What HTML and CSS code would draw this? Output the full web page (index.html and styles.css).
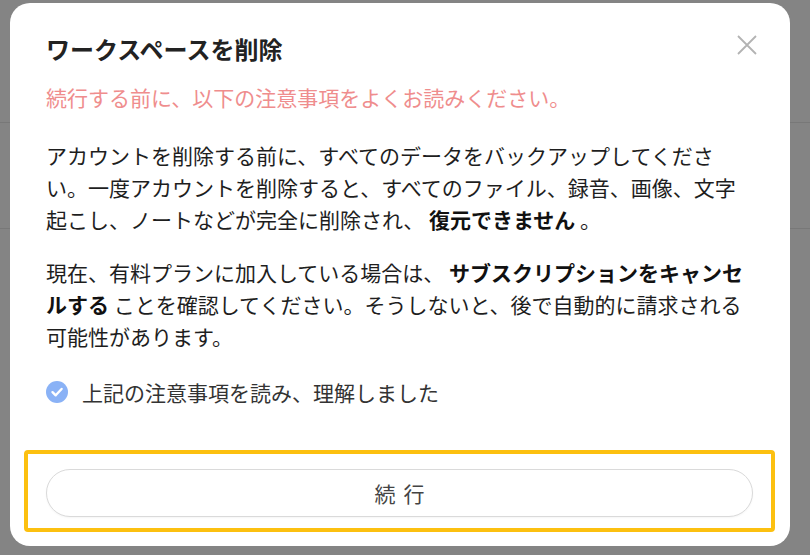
FILE: index.html
```html
<!doctype html>
<html lang="ja">
<head>
<meta charset="utf-8">
<meta name="viewport" content="width=device-width, initial-scale=1.0">
<link rel="stylesheet" href="styles.css">
<title>ワークスペースを削除</title>
</head>
<body>
<div class="dialog">
    <div class="dialog-head">
        <h2 class="dialog-title">ワークスペースを削除</h2>
        <button class="close-btn" aria-label="閉じる">
            <svg width="20" height="20" viewBox="0 0 20 20"><path d="M1 1 L19 19 M19 1 L1 19" stroke="#b3b3b3" stroke-width="1.8" fill="none"/></svg>
        </button>
    </div>

    <p class="notice">続行する前に、以下の注意事項をよくお読みください。</p>

    <p class="para">アカウントを削除する前に、すべてのデータをバックアップしてください。一度アカウントを削除すると、すべてのファイル、録音、画像、文字起こし、ノートなどが完全に削除され、 <strong>復元できません</strong> 。</p>

    <p class="para">現在、有料プランに加入している場合は、 <strong>サブスクリプションをキャンセルする</strong> ことを確認してください。そうしないと、後で自動的に請求される可能性があります。</p>

    <label class="check-row">
        <span class="check-icon">
            <svg width="22" height="22" viewBox="0 0 22 22"><circle cx="11" cy="11" r="11" fill="#8ab2f6"/><path d="M6.5 11.2 L9.7 14.3 L15.6 8" stroke="#fff" stroke-width="2.4" fill="none" stroke-linecap="round" stroke-linejoin="round"/></svg>
        </span>
        上記の注意事項を読み、理解しました
    </label>

    <div class="action-frame">
        <button class="continue-btn">続行</button>
    </div>
</div>
</body>
</html>
```

FILE: styles.css
```css
html, body {
    margin: 0;
    padding: 0;
}
body {
    width: 810px;
    height: 555px;
    overflow: hidden;
    font-family: "Noto Sans CJK JP", "Noto Sans", sans-serif;
    background-color: #848484;
    background-image: linear-gradient(#787878, #787878), linear-gradient(#787878, #787878);
    background-size: 100% 1px, 100% 1px;
    background-position: 0 122px, 0 228px;
    background-repeat: no-repeat;
}
h2, p {
    margin: 0;
    padding: 0;
}

.dialog {
    box-sizing: border-box;
    width: 780px;
    height: 543px;
    margin: 3px 0 0 10px;
    padding: 30px 40px 0 36px;
    background: #fff;
    border-radius: 20px;
    color: #1e1e1e;
}

.dialog-head {
    display: flex;
    justify-content: space-between;
    align-items: center;
    height: 32px;
}
.dialog-title {
    font-size: 24px;
    line-height: 32px;
    font-weight: bold;
    color: #222;
}
.close-btn {
    border: 0;
    background: none;
    padding: 0;
    margin: -9px -7px 0 0;
    width: 20px;
    height: 20px;
    cursor: pointer;
}
.close-btn svg {
    display: block;
}

.notice {
    margin-top: 16px;
    font-size: 21px;
    line-height: 32px;
    color: #ef8d8d;
}

.para {
    font-size: 21px;
    line-height: 32px;
    margin-top: 26px;
}
.para + .para {
    margin-top: 21px;
}
.para strong {
    font-weight: bold;
    color: #111;
}

.check-row {
    display: flex;
    align-items: center;
    gap: 14px;
    margin-top: 24px;
    height: 32px;
    font-size: 21px;
    color: #333;
}
.check-icon {
    display: flex;
}

.action-frame {
    margin: 42px 0 0 -22px;
    width: 751px;
    height: 82px;
    box-sizing: border-box;
    border: 4px solid #fcc010;
    border-radius: 4px;
    padding: 15px 18px 0 18px;
}
.continue-btn {
    display: block;
    width: 100%;
    height: 48px;
    border: 1px solid #dadada;
    border-radius: 24px;
    background: #fff;
    font-family: "Noto Sans CJK JP", "Noto Sans", sans-serif;
    font-size: 21px;
    letter-spacing: 8px;
    padding: 0 0 0 8px;
    color: #444;
    box-shadow: 0 1px 2px rgba(0, 0, 0, 0.04);
}
```
